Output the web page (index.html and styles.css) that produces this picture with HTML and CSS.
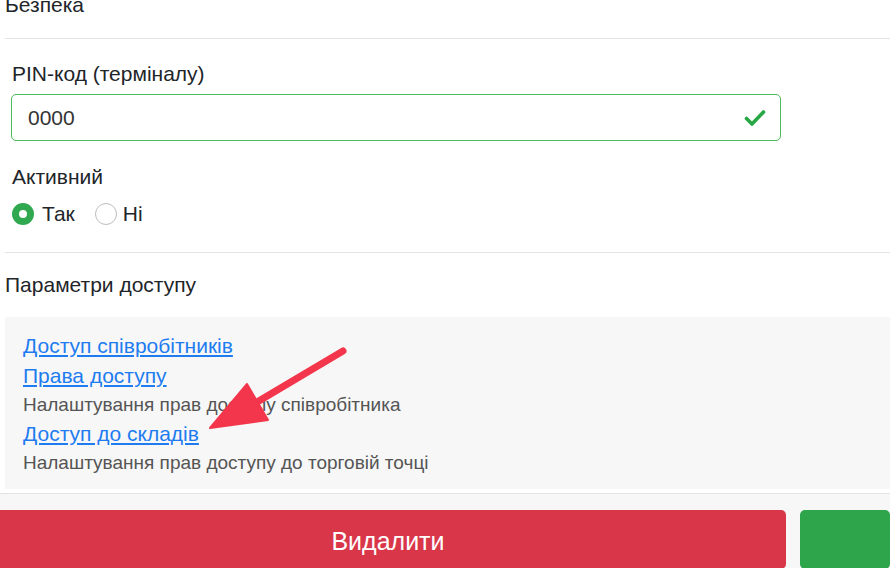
FILE: index.html
```html
<!DOCTYPE html>
<html lang="uk">
<head>
<meta charset="utf-8">
<title>Безпека</title>
<link rel="stylesheet" href="styles.css">
</head>
<body>
<div class="page">
  <h5 class="section-title first">Безпека</h5>
  <hr class="divider">
  <div class="group">
    <label class="field-label">PIN-код (терміналу)</label>
    <div class="input valid">
      <span class="input-value">0000</span>
      <svg class="check" width="22" height="18" viewBox="0 0 22 18"><path d="M2.5 9.5 L8 15 L19.5 3" fill="none" stroke="#28a745" stroke-width="3.6" stroke-linecap="round" stroke-linejoin="round"/></svg>
    </div>
  </div>
  <div class="group">
    <label class="field-label">Активний</label>
    <div class="radios">
      <span class="radio checked"></span><span class="radio-label">Так</span>
      <span class="radio"></span><span class="radio-label">Ні</span>
    </div>
  </div>
  <hr class="divider">
  <h5 class="section-title">Параметри доступу</h5>
  <div class="access-box">
    <a class="access-link" href="#">Доступ співробітників</a>
    <a class="access-link" href="#">Права доступу</a>
    <div class="access-desc">Налаштування прав доступу співробітника</div>
    <a class="access-link" href="#">Доступ до складів</a>
    <div class="access-desc">Налаштування прав доступу до торговій точці</div>
  </div>
  <div class="footer">
    <button class="btn btn-danger">Видалити</button>
    <button class="btn btn-success"></button>
  </div>
  <svg class="arrow" width="890" height="568" viewBox="0 0 890 568">
    <path d="M343 358 L252 412" stroke="#f3364c" stroke-width="7" stroke-linecap="round" fill="none"/>
    <path d="M210 435 L247 391 L268 427 Z" fill="#f3364c" stroke="#f3364c" stroke-width="2" stroke-linejoin="round"/>
  </svg>
</div>
</body>
</html>
```
FILE: styles.css
```css
* { box-sizing: border-box; }
html, body { margin: 0; padding: 0; background: #fff; overflow: hidden; }
body {
  font-family: "Liberation Sans", Arial, sans-serif;
  font-size: 21px;
  color: #212529;
  width: 890px;
  height: 568px;
}
.page {
  position: relative;
  padding-left: 5px;
  height: 568px;
}
.section-title {
  font-size: 21px;
  font-weight: 500;
  margin: 0;
  line-height: 24px;
  color: #212529;
}
.section-title.first {
  margin-top: -7px;
}
.divider {
  border: 0;
  border-top: 1px solid #e3e3e3;
  margin: 21px 0 0 0;
  height: 0;
}
.group {
  padding-left: 6px;
  padding-right: 109px;
}
.field-label {
  display: block;
  line-height: 24px;
  margin-top: 23px;
  padding-left: 1px;
}
.input {
  margin-top: 8px;
  height: 47px;
  border: 1.5px solid #4cbb5c;
  border-radius: 5px;
  display: flex;
  align-items: center;
  justify-content: space-between;
  padding: 0 14px 0 16px;
}
.input-value { color: #333; font-size: 21px; }
.check { display: block; margin-top: 1px; }
.group + .group .field-label { margin-top: 24px; }
.radios {
  display: flex;
  align-items: center;
  margin-top: 12px;
  height: 26px;
}
.radio {
  width: 22px;
  height: 22px;
  border-radius: 50%;
  border: 1px solid #bdbdbd;
  background: #fff;
  flex: none;
  margin-left: 1px;
}
.radio.checked {
  border: 7px solid #2fa84f;
  background: #fff;
}
.radio-label {
  margin-left: 8px;
  margin-right: 19px;
  color: #212529;
}
.radio-label:last-child { margin-left: 6px; }
.divider + .section-title { margin-top: 20px; }
.group + .divider { margin-top: 25px; }
.access-box {
  margin-top: 20px;
  background: #f7f7f7;
  padding: 14px 18px 12px;
}
.access-link, .access-desc {
  display: block;
  line-height: 29px;
  height: 29px;
}
.access-link {
  color: #1e7cf0;
  text-decoration: underline;
  text-underline-offset: 2px;
}
.access-desc {
  color: #555;
  font-size: 19px;
}
.access-link + .access-link { margin-top: 1px; }
.footer {
  margin-top: 4px;
  margin-left: -15px;
  border-top: 1px solid #e2e2e2;
  background: #f7f7f7;
  padding-top: 16px;
  display: flex;
  gap: 14px;
  height: 76px;
}
.btn {
  border: 0;
  border-radius: 5px;
  height: 59px;
  font-family: inherit;
  font-size: 25px;
  color: #fff;
  padding: 3px 0 0;
}
.btn-danger {
  background: #d93649;
  width: 796px;
  flex: none;
}
.btn-success {
  background: #2ea44b;
  flex: 1;
}
.arrow {
  position: absolute;
  left: 0;
  top: 0;
  pointer-events: none;
}
```
